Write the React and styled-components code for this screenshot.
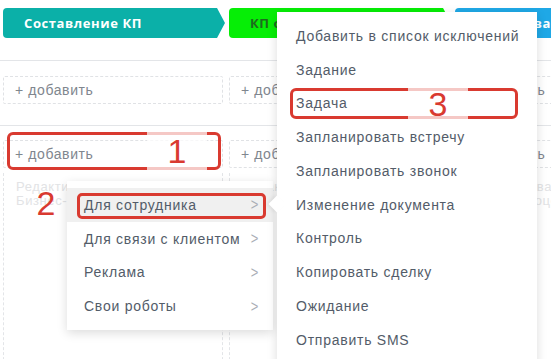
import React from 'react';
import styled, { createGlobalStyle } from 'styled-components';

const Global = createGlobalStyle`
	html, body {
		margin: 0;
		padding: 0;
		background: #fff;
		overflow: hidden;
	}
	body {
		width: 551px;
		height: 359px;
		font-family: 'Liberation Sans', Arial, sans-serif;
	}
`;

const Page = styled.div`
	position: relative;
	width: 551px;
	height: 359px;
	overflow: hidden;
`;

const Stages = styled.div`
	display: flex;
	gap: 4px;
	padding: 8px 0 0 3px;
	margin-bottom: 22px;
`;

const Stage = styled.div`
	flex: 0 0 222px;
	height: 30px;
	display: flex;
	align-items: center;
	padding-left: 21px;
	box-sizing: border-box;
	border-radius: 4px;
	background: ${(p) => p.$bg};
	color: ${(p) => p.$fg};
	font-family: 'Open Sans', sans-serif;
	font-weight: 700;
	font-size: 13px;
	letter-spacing: 0.6px;
	white-space: nowrap;
	clip-path: polygon(0 0, calc(100% - 8px) 0, 100% 50%, calc(100% - 8px) 100%, 0 100%);
`;

const Section = styled.div`
	border-top: 1px solid #e3e5e8;
	padding: ${(p) => p.$pad};
`;

const Columns = styled.div`
	display: grid;
	grid-template-columns: repeat(3, 220px);
	column-gap: 6px;
	padding-left: 3px;
`;

const AddCard = styled.div`
	height: 28px;
	border: 1px dashed #e0e2e5;
	border-radius: 2px;
	display: flex;
	align-items: center;
	padding-left: 11px;
	font-size: 14px;
	letter-spacing: 0.6px;
	color: #80868e;
	box-sizing: border-box;
`;

const Body = styled.div`
	margin-top: 5px;
	height: 200px;
	border-left: 1px dashed #e3e5e8;
	border-right: 1px dashed #e3e5e8;
	padding: 7px 0 0 12px;
	font-size: 13px;
	line-height: 14px;
	letter-spacing: 0.6px;
	color: #e2e3e5;
`;

const Menu = styled.div`
	position: absolute;
	left: ${(p) => p.$left}px;
	top: ${(p) => p.$top}px;
	width: ${(p) => p.$width}px;
	height: ${(p) => p.$height}px;
	box-sizing: border-box;
	background: #fff;
	box-shadow: 0 3px 10px rgba(0, 0, 0, 0.14);
	padding-top: ${(p) => p.$padTop}px;
`;

const Item = styled.div`
	height: 33.75px;
	display: flex;
	align-items: center;
	justify-content: space-between;
	padding: 0 14px 0 ${(p) => p.$indent}px;
	font-size: 14px;
	letter-spacing: 0.75px;
	color: #535c69;
	white-space: nowrap;
	background: ${(p) => (p.$active ? '#f0f0f0' : 'transparent')};
`;

const Chevron = styled.span`
	font-size: 13px;
	color: #a8adb4;
	transform: scaleY(1.2);
`;

const Pointer = styled.div`
	position: absolute;
	left: -6px;
	top: 186px;
	width: 12px;
	height: 12px;
	background: #fff;
	transform: rotate(45deg);
	box-shadow: -2px 2px 4px rgba(0, 0, 0, 0.06);
`;

const Mark = styled.div`
	position: absolute;
	left: ${(p) => p.$x}px;
	top: ${(p) => p.$y}px;
	width: ${(p) => p.$w}px;
	height: ${(p) => p.$h}px;
	border: 3.5px solid #d93a30;
	border-radius: ${(p) => p.$r}px;
	box-sizing: border-box;
`;

const Label = styled.div`
	position: absolute;
	left: ${(p) => p.$x}px;
	top: ${(p) => p.$y}px;
	width: ${(p) => p.$w}px;
	height: ${(p) => p.$h}px;
	display: flex;
	align-items: center;
	justify-content: center;
	background: ${(p) => (p.$bg ? 'rgba(255, 255, 255, 0.72)' : 'transparent')};
	color: #d93a30;
	font-family: 'Liberation Sans', Arial, sans-serif;
	font-size: 34px;
	line-height: 1;
`;

const leftItems = ['Для сотрудника', 'Для связи с клиентом', 'Реклама', 'Свои роботы'];

const rightItems = [
	'Добавить в список исключений',
	'Задание',
	'Задача',
	'Запланировать встречу',
	'Запланировать звонок',
	'Изменение документа',
	'Контроль',
	'Копировать сделку',
	'Ожидание',
	'Отправить SMS',
	'Отправить письмо',
];

const App = () => {
	return (
		<Page>
			<Global />
			<Stages>
				<Stage $bg="#0bb0a8" $fg="#fff">Составление КП</Stage>
				<Stage $bg="#06ee06" $fg="#1d6b1d">КП отправлено</Stage>
				<Stage $bg="#1fa8e6" $fg="#fff">Согласование</Stage>
			</Stages>
			<Section $pad="15px 0 21px">
				<Columns>
					<AddCard>+ добавить</AddCard>
					<AddCard>+ добавить</AddCard>
					<AddCard>+ добавить</AddCard>
				</Columns>
			</Section>
			<Section $pad="14px 0 0">
				<Columns>
					<div>
						<AddCard>+ добавить</AddCard>
						<Body>
							Редактировать
							<br />
							Бизнес-процессы
						</Body>
					</div>
					<div>
						<AddCard>+ добавить</AddCard>
						<Body>
							Редактировать
							<br />
							Бизнес-процессы
						</Body>
					</div>
					<div>
						<AddCard>+ добавить</AddCard>
						<Body>
							Редактировать
							<br />
							Бизнес-процессы
						</Body>
					</div>
				</Columns>
			</Section>

			<Mark $x={7} $y={132} $w={214} $h={38} $r={6} />
			<Label $x={147} $y={132} $w={60} $h={38} $bg>1</Label>

			<Menu $left={67} $top={181} $width={206} $height={149} $padTop={7}>
				{leftItems.map((t, i) => (
					<Item key={t} $indent={17} $active={i === 0}>
						<span>{t}</span>
						<Chevron>&gt;</Chevron>
					</Item>
				))}
			</Menu>
			<Mark $x={77} $y={193} $w={189} $h={26} $r={5} />
			<Label $x={28} $y={186} $w={36} $h={34}>2</Label>

			<Menu $left={277} $top={12} $width={260} $height={380} $padTop={7}>
				<Pointer />
				{rightItems.map((t) => (
					<Item key={t} $indent={19}>
						<span>{t}</span>
					</Item>
				))}
			</Menu>
			<Mark $x={290} $y={88} $w={228} $h={31} $r={6} />
			<Label $x={408} $y={88} $w={60} $h={31} $bg>3</Label>
		</Page>
	);
};

export default App;
